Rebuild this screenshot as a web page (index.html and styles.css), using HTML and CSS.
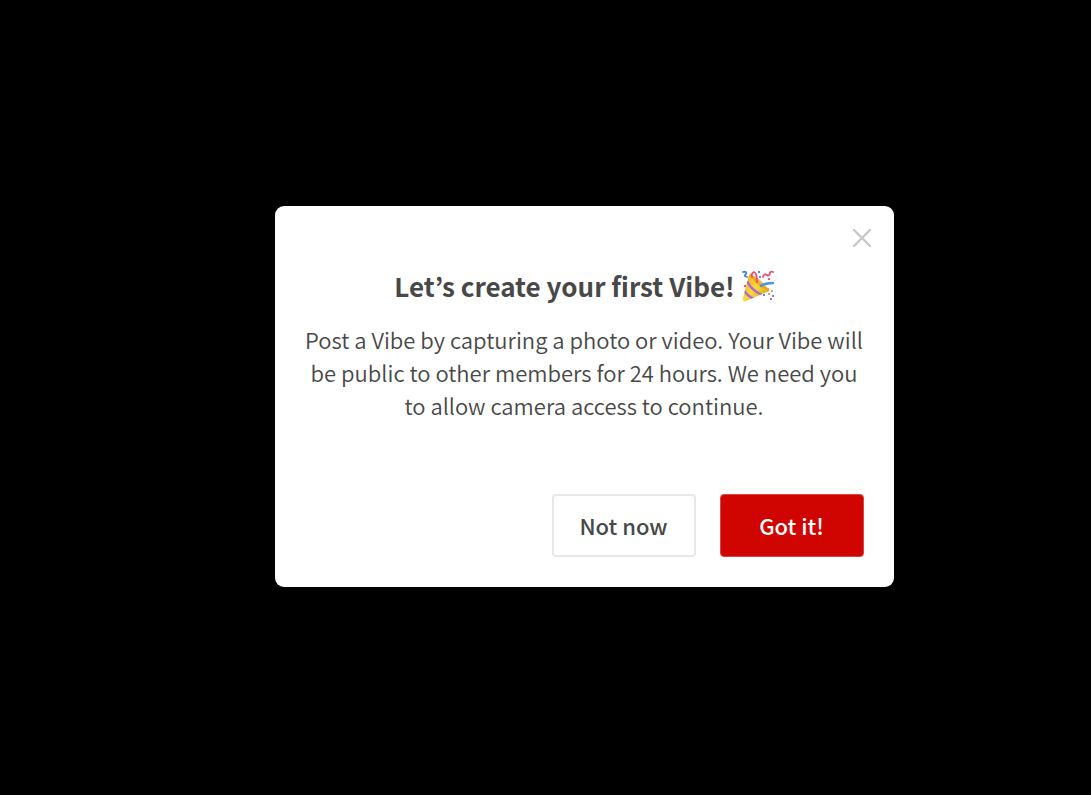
FILE: index.html
```html
<!DOCTYPE html>
<html lang="en">
<head>
  <meta charset="UTF-8" />
  <meta name="viewport" content="width=device-width, initial-scale=1" />
  <title>Create your first Vibe</title>
  <link rel="stylesheet" href="styles.css">
</head>
<body>
  <div class="overlay">
    <div class="modal" role="dialog" aria-labelledby="vibe-title">
      <button type="button" class="close" aria-label="Close">
        <svg viewBox="0 0 20 20" width="20" height="20"><path d="M2 2 18 18M18 2 2 18" /></svg>
      </button>

      <h2 class="title" id="vibe-title">
        Let’s create your first Vibe!
        <svg class="popper" viewBox="0 0 32 32" width="32" height="32" aria-hidden="true">
          <defs>
            <linearGradient id="cone" x1="0" y1="0" x2="1" y2="1">
              <stop offset="0" stop-color="#f0a010" />
              <stop offset="0.5" stop-color="#fbd93a" />
              <stop offset="1" stop-color="#d0940c" />
            </linearGradient>
            <clipPath id="cone-clip"><path d="M9 4 27 19Q28 22 25 22L4 31Q0 32 1 28L7 5Q8 3 9 4Z" /></clipPath>
          </defs>
          <!-- cone -->
          <path d="M9 4 27 19Q28 22 25 22L4 31Q0 32 1 28L7 5Q8 3 9 4Z" fill="url(#cone)" />
          <path d="M9 5Q19 7 26 20Q13 17 9 5Z" fill="#d9980c" opacity=".5" />
          <g clip-path="url(#cone-clip)" fill="none" stroke="#a868d8" stroke-width="2.4">
            <path d="M5 11Q9 20 20 25" />
            <path d="M2 20Q5 26 12 29" />
          </g>
          <!-- streamers -->
          <g fill="none" stroke-width="1.8" stroke-linecap="round">
            <path d="M15 12Q15 3 12 2Q9 3 10 7" stroke="#f04a72" />
            <path d="M19 16Q23 13 31 13" stroke="#4a94ea" stroke-width="2.4" />
            <path d="M1 2Q5 1 4 4Q1 6 5 7" stroke="#3f7fdd" />
            <path d="M21 7Q22 3 25 5Q27 7 28 3Q28 1 31 2" stroke="#e94d7d" />
          </g>
          <!-- confetti -->
          <g fill="#4a90e8">
            <rect x="16" y="1" width="2" height="2" />
            <rect x="17" y="6" width="2" height="2" />
            <rect x="21" y="24" width="2" height="2" />
            <rect x="30" y="25" width="2" height="2" />
          </g>
          <g fill="#e95886">
            <rect x="26" y="8" width="2" height="2" />
            <rect x="2" y="15" width="2" height="2" />
            <rect x="28" y="28" width="2" height="2" />
          </g>
          <g fill="#f39a57">
            <rect x="25" y="18" width="2" height="2" />
            <rect x="29" y="20" width="2" height="2" />
            <rect x="26" y="23" width="2" height="2" />
          </g>
        </svg>
      </h2>

      <p class="text">Post a Vibe by capturing a photo or video. Your Vibe will be public to other members for 24 hours. We need you to allow camera access to continue.</p>

      <div class="actions">
        <button type="button" class="btn">Not now</button>
        <button type="button" class="btn btn-primary">Got it!</button>
      </div>
    </div>
  </div>
</body>
</html>
```
FILE: styles.css
```css
* {
  margin: 0;
  padding: 0;
  box-sizing: border-box;
  font-family: "Noto Sans CJK KR", "Noto Sans", sans-serif;
}

body {
  background-color: #000;
  color: #484848;
}

.overlay {
  min-height: 100vh;
  padding: 16px 0 18px 77px;
  display: flex;
  justify-content: center;
  align-items: center;
}

.modal {
  position: relative;
  width: 100%;
  max-width: 619px;
  padding: 62px 24px 30px;
  background-color: #fff;
  border-radius: 9px;
}

.close {
  position: absolute;
  top: 16px;
  right: 16px;
  width: 32px;
  height: 32px;
  display: flex;
  justify-content: center;
  align-items: center;
  background: none;
  border: none;
  cursor: pointer;
}

.close svg {
  fill: none;
  stroke: #c8c8c8;
  stroke-width: 2.4;
  stroke-linecap: round;
}

.title {
  display: flex;
  justify-content: center;
  align-items: center;
  gap: 7px;
  font-size: 26px;
  font-weight: 700;
  line-height: 36px;
}

.popper {
  flex-shrink: 0;
}

.text {
  margin-top: 19px;
  font-size: 22px;
  font-weight: 350;
  line-height: 33px;
  text-align: center;
}

.actions {
  margin-top: 72px;
  padding: 0 6px;
  display: flex;
  justify-content: flex-end;
  gap: 24px;
}

.btn {
  width: 144px;
  height: 63px;
  padding-bottom: 2px;
  background-color: #fff;
  color: #484848;
  border: 2px solid #e8e8e8;
  border-radius: 4px;
  font-size: 22px;
  font-weight: 500;
  cursor: pointer;
}

.btn-primary {
  background-color: #d00400;
  border: 1px solid #dc4542;
  color: #fff;
}
```
